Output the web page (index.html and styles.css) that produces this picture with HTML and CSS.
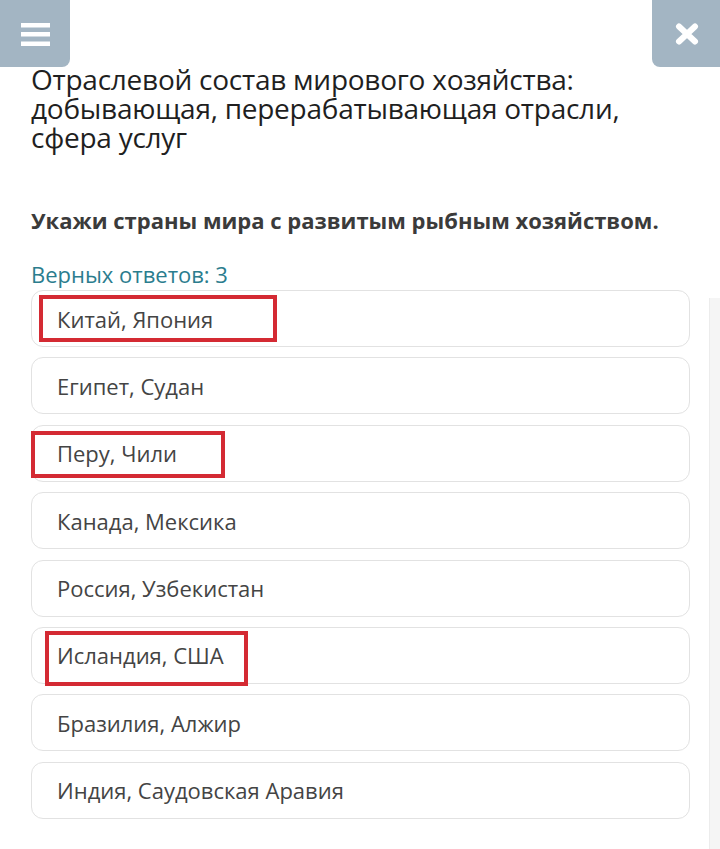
FILE: index.html
```html
<!DOCTYPE html>
<html lang="ru">
<head>
<meta charset="utf-8">
<link rel="stylesheet" href="styles.css">
</head>
<body>
<div class="page">
  <div class="topbar">
    <button class="btn btn-menu" aria-label="menu">
      <svg width="29" height="24" viewBox="0 0 29 24"><rect x="0" y="0" width="29" height="4.5" fill="#fff"/><rect x="0" y="9" width="29" height="4.5" fill="#fff"/><rect x="0" y="18.5" width="29" height="4.5" fill="#fff"/></svg>
    </button>
    <button class="btn btn-close" aria-label="close">
      <svg width="24" height="22" viewBox="0 0 24 22"><path d="M4 3.5 L20 18.5 M20 3.5 L4 18.5" stroke="#fff" stroke-width="6" stroke-linecap="round"/></svg>
    </button>
  </div>
  <h1 class="title">Отраслевой состав мирового хозяйства: добывающая, перерабатывающая отрасли, сфера услуг</h1>
  <p class="question">Укажи страны мира с развитым рыбным хозяйством.</p>
  <p class="hint">Верных ответов: 3</p>
  <ul class="options">
    <li class="option"><span class="mark mark-1"></span>Китай, Япония</li>
    <li class="option">Египет, Судан</li>
    <li class="option"><span class="mark mark-2"></span>Перу, Чили</li>
    <li class="option">Канада, Мексика</li>
    <li class="option">Россия, Узбекистан</li>
    <li class="option"><span class="mark mark-3"></span>Исландия, США</li>
    <li class="option">Бразилия, Алжир</li>
    <li class="option">Индия, Саудовская Аравия</li>
  </ul>
  <div class="scrolltrack"></div>
</div>
</body>
</html>
```
FILE: styles.css
```css
* { box-sizing: border-box; }
html, body { margin: 0; padding: 0; background: #fff; }
body { font-family: "Open Sans", "Noto Sans", sans-serif; color: #444; }
.page { position: relative; width: 720px; height: 849px; overflow: hidden; }
.topbar { display: flex; justify-content: space-between; height: 67px; }
.btn { border: 0; padding: 0; margin: 0; background: #a3b5c3; display: flex; align-items: center; justify-content: center; cursor: pointer; }
.btn-menu { width: 70px; height: 67px; border-radius: 0 0 8px 0; padding-top: 3px; }
.btn-close { width: 68px; height: 67px; border-radius: 0 0 0 8px; padding-left: 1px; }
.title { margin: -2px 0 0 31px; width: 620px; font-weight: 400; font-size: 28px; line-height: 29px; color: #1f1f1f; font-stretch: 92.5%; letter-spacing: -0.25px; }
.question { margin: 54px 0 0 31px; font-weight: 700; font-size: 22px; line-height: 28px; color: #3b3b3b; }
.hint { margin: 26px 0 0 31px; font-size: 22px; line-height: 28px; color: #2b7d8e; }
.options { list-style: none; margin: 2px 0 0 31px; padding: 0; width: 659px; }
.option { position: relative; height: 57px; margin-bottom: 10.4px; border: 1px solid #e2e2e2; border-radius: 12px; padding-left: 25px; display: flex; align-items: center; font-size: 22px; color: #444; }
.mark { position: absolute; border: 4px solid #d42a33; }
.mark-1 { left: 7px; top: 4px; width: 238px; height: 47px; }
.mark-2 { left: -1px; top: 5px; width: 194px; height: 47px; }
.mark-3 { left: 13px; top: 3px; width: 203px; height: 55px; }
.scrolltrack { position: absolute; right: 0; top: 298px; width: 11px; height: 551px; background: #f5f5f5; border-left: 1px solid #ececec; }
```
